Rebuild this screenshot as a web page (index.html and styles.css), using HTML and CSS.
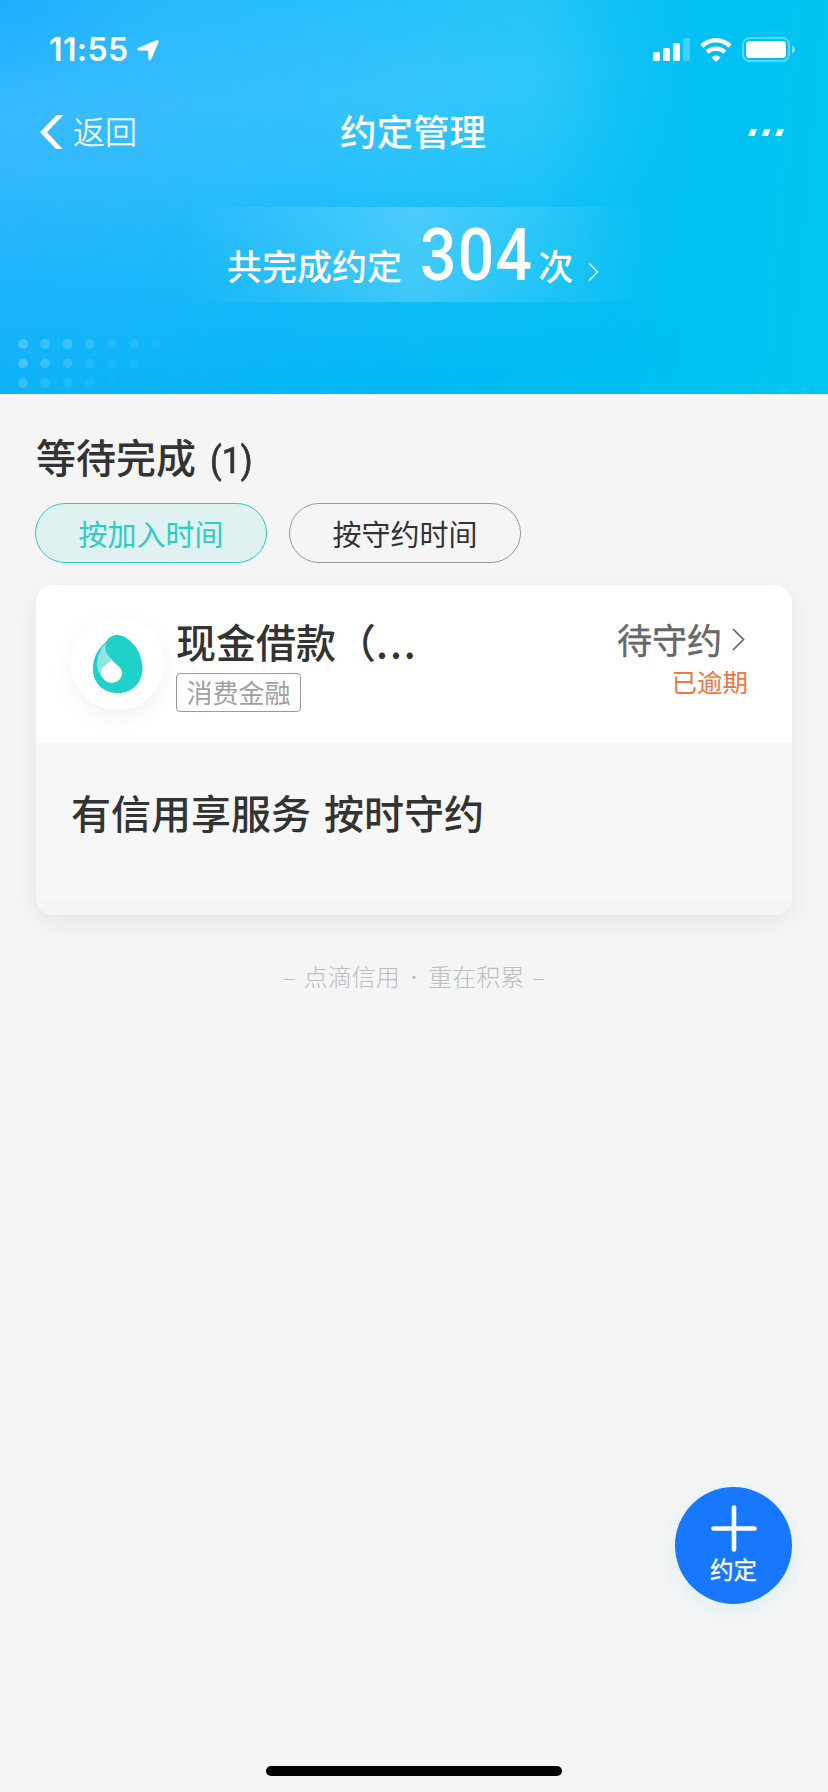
FILE: index.html
```html
<!DOCTYPE html>
<html lang="zh-CN">
<head>
<meta charset="utf-8">
<title>约定管理</title>
<link rel="stylesheet" href="styles.css">
</head>
<body>
<div class="screen">
  <header class="hero">
    <svg class="hero-dots" viewBox="0 0 828 394" fill="#fff">
      <g opacity=".22"><circle cx="23" cy="344" r="5"/><circle cx="23" cy="363.5" r="4.8"/></g>
      <g opacity=".17"><circle cx="45.2" cy="344" r="5"/><circle cx="67.5" cy="344" r="5"/><circle cx="45.2" cy="363.5" r="4.8"/><circle cx="23" cy="383" r="4.8"/></g>
      <g opacity=".12"><circle cx="89.6" cy="344" r="5"/><circle cx="67.5" cy="363.5" r="4.8"/><circle cx="45.2" cy="383" r="4.8"/></g>
      <g opacity=".08"><circle cx="112" cy="344" r="5"/><circle cx="134" cy="344" r="5"/><circle cx="89.6" cy="363.5" r="4.8"/><circle cx="67.5" cy="383" r="4.6"/></g>
      <g opacity=".05"><circle cx="156.5" cy="344" r="5"/><circle cx="112" cy="363.5" r="4.8"/><circle cx="134" cy="363.5" r="4.6"/><circle cx="89.6" cy="383" r="4.6"/><circle cx="783" cy="390" r="4.5"/><circle cx="805" cy="390" r="4.5"/></g>
      <g opacity=".02"><circle cx="156.5" cy="363.5" r="4.5"/><circle cx="112" cy="383" r="4.5"/><circle cx="761" cy="390" r="4.5"/></g>
    </svg>
    <div class="status">
      <div class="clock">
        <span class="time">11:55</span>
        <svg width="22" height="21" viewBox="0 0 22 21"><path d="M1.200 8.200 19.400.5Q22-.2 21.200 2.400L14 19Q12.600 21.500 11.600 19L11.400 11.200Q11.300 10.200 10.300 10.200L1.600 10.300Q-.8 9.600 1.200 8.200Z" fill="#fff" stroke="#fff" stroke-width=".6"/></svg>
      </div>
      <div class="signals">
        <svg width="37" height="23" viewBox="0 0 37 23" fill="#fff"><rect y="14" width="7" height="9" rx="1.6"/><rect x="10" y="10" width="7" height="13" rx="1.6"/><rect x="20" y="5" width="7" height="18" rx="1.6"/><rect x="30" width="7" height="23" rx="1.6" opacity=".25"/></svg>
        <svg width="32" height="24" viewBox="0 0 32 24" fill="none" stroke="#fff" stroke-width="4.4"><path d="M1.8 8.2Q8 2.3 16 2.3T30.2 8.2"/><path d="M7 14.2Q11 10.6 16 10.6T25 14.2"/><path d="M16 24 11.4 19.4Q16 15.8 20.6 19.4Z" fill="#fff" stroke="none"/></svg>
        <svg width="53" height="25" viewBox="0 0 53 25"><rect x="1" y="1" width="46" height="23" rx="6.500" fill="none" stroke="#fff" stroke-width="2" opacity=".35"/><rect x="4" y="4" width="40" height="17" rx="3.500" fill="#fff"/><path d="M50 8.500Q53 9.500 53 12.500T50 16.500Z" fill="#fff" opacity=".45"/></svg>
      </div>
    </div>
    <nav class="nav">
      <a class="back">
        <svg width="24" height="34" viewBox="0 0 24 34"><path d="M16.500 0H23.500L7 17.300 22.700 34H16L0 17.300Z" fill="#fff"/></svg>
        <span>返回</span>
      </a>
      <h1 class="title">约定管理</h1>
      <svg class="more" width="37" height="7" viewBox="0 0 37 7" fill="#fff"><path d="M3 0H9L6.400 7H.2Z"/><path d="M16.500 0H22.500L19.900 7H13.700Z"/><path d="M30 0H36L33.400 7H27.200Z"/></svg>
    </nav>
    <div class="total">
      <span class="total-label">共完成约定</span>
      <span class="total-num">304</span>
      <span class="total-unit">次</span>
      <svg class="total-arrow" width="11" height="20" viewBox="0 0 11 20" fill="none" stroke="#fff" stroke-width="1.3"><path d="M1 1.300 9.600 10 1 18.700"/></svg>
    </div>
  </header>

  <main class="content">
    <h2 class="section-title">等待完成<span class="count">(1)</span></h2>
    <div class="tabs">
      <button class="tab tab-active">按加入时间</button>
      <button class="tab">按守约时间</button>
    </div>
    <article class="card">
      <div class="card-head">
        <div class="logo">
          <svg width="50" height="58" viewBox="0 0 50 58"><path d="M24 0C36 0 49.500 16 49.500 33C49.500 48 39 58 25 58C10 58 0 48 0 34C0 21 6 13 13 7C16 2 19 0 24 0Z" fill="#1fd1c9"/><path d="M13 8C6 15 3 25 4.500 33C5 37 7 40 9 42L20 26C14 20 11 15 13 8Z" fill="#8ce7e3"/><path d="M18.500 24C21 29 29.300 31.500 29.300 38.500A10.700 10.400 0 0 1 8 38.500C8 32 15 29.500 18.500 24Z" fill="#fff"/></svg>
        </div>
        <div class="info">
          <div class="name">现金借款（<span class="ellipsis">...</span></div>
          <span class="tag">消费金融</span>
        </div>
        <div class="state">
          <div class="state-main">待守约<svg width="13" height="23" viewBox="0 0 13 23" fill="none" stroke="#666" stroke-width="1.700"><path d="M1 1 11.500 11.500 1 22"/></svg></div>
          <div class="overdue">已逾期</div>
        </div>
      </div>
      <div class="card-body">有信用享服务 按时守约</div>
      <div class="card-foot"></div>
    </article>
    <p class="slogan">– 点滴信用 <span class="dot">·</span> 重在积累 –</p>
  </main>

  <button class="fab">
    <svg width="46" height="47" viewBox="0 0 46 47" fill="none" stroke="#fff" stroke-width="4.600" stroke-linecap="round"><path d="M23 2.500V44.500M2.500 23.500H43.500"/></svg>
    <span>约定</span>
  </button>
  <div class="home-bar"></div>
</div>
</body>
</html>
```
FILE: styles.css
```css
* { box-sizing: border-box; }
body { margin: 0; background: #f5f5f5; font-family: "Noto Sans CJK SC", sans-serif; color: #333; }
svg { display: block; flex: none; }
button { font-family: inherit; margin: 0; padding: 0; }
.screen { position: relative; width: 828px; height: 1792px; overflow: hidden; background: #f5f5f5; }

.hero {
  position: relative;
  height: 394px;
  color: #fff;
  background: linear-gradient(95deg, #0cb1f8 0%, #04b8f6 45%, #00bef4 76%, #00c3f1 90%, #00c6f0 100%);
}
.hero::before {
  content: "";
  position: absolute;
  inset: 0;
  background:
    radial-gradient(ellipse 150px 90px at 0 0, rgba(20,160,255,.45), rgba(20,160,255,0)),
    linear-gradient(90deg, #38b8ff 0%, #36c0fd 35%, #34cbf9 70%);
  -webkit-mask-image:
    linear-gradient(175deg, rgba(0,0,0,.6) 0%, #000 26%, rgba(0,0,0,.85) 38%, rgba(0,0,0,.4) 60%, transparent 90%),
    linear-gradient(90deg, #000 50%, rgba(0,0,0,.9) 64%, rgba(0,0,0,.3) 76%, transparent 86%);
  -webkit-mask-composite: source-in;
  mask-composite: intersect;
}
.hero-dots { position: absolute; inset: 0; width: 828px; height: 394px; }
.status { position: relative; display: flex; justify-content: space-between; height: 96px; padding: 36px 33px 0 49px; }
.clock { display: flex; gap: 8px; height: 28px; align-items: center; }
.time { font: 600 32px/28px Inter, sans-serif; letter-spacing: .4px; }
.signals { display: flex; gap: 10px; height: 27px; align-items: center; }

.nav { position: relative; display: grid; grid-template-columns: 1fr auto 1fr; align-items: center; height: 72px; padding: 0 43px 0 40px; }
.back { display: flex; align-items: center; gap: 9px; font-size: 32px; line-height: 40px; font-weight: 300; -webkit-text-stroke: .3px #fff; }
.back span { padding-bottom: 4px; }
.title { margin: 0 0 0 1px; padding-bottom: 3px; font-size: 36.500px; line-height: 44px; font-weight: 500; }
.more { justify-self: end; }

.total {
  position: relative;
  display: flex;
  align-items: baseline;
  height: 95px;
  width: 500px;
  margin: 39px auto 0;
  padding-left: 63px;
  background: linear-gradient(90deg, rgba(255,255,255,0) 4%, rgba(255,255,255,.2) 50%, rgba(255,255,255,0) 98%);
}
.total-label { font-size: 35px; line-height: 116px; font-weight: 500; }
.total-num { margin-left: 18px; font: 500 72px/91px Roboto, sans-serif; letter-spacing: 1.500px; transform: scaleX(.89); transform-origin: left; }
.total-unit { margin-left: -9px; font-size: 35px; line-height: 91px; font-weight: 500; }
.total-arrow { margin-left: 15px; align-self: flex-start; margin-top: 55px; }

.content { padding: 37px 36px 0; }
.section-title { margin: 0; font-size: 40px; line-height: 50px; font-weight: 500; }
.count { display: inline-block; margin-left: 14px; font: 400 37px/40px Roboto, sans-serif; -webkit-text-stroke: .7px #333; transform: scaleX(.92); transform-origin: left; }
.tabs { display: flex; gap: 22px; margin: 22px 0 0 -1px; }
.tab { width: 232px; height: 60px; border: 1px solid #999; border-radius: 30px; background: transparent; color: #333; font-size: 29px; line-height: 56px; }
.tab-active { border-color: #2cccc6; background: #dff1f1; color: #2cccc6; }

.card { margin-top: 22px; height: 330px; border-radius: 18px; overflow: hidden; background: #f7f7f7; box-shadow: 0 8px 26px rgba(0,0,0,.065); display: flex; flex-direction: column; }
.card-head { display: flex; height: 158px; padding: 0 45px 0 35px; background: #fff; }
.logo { flex: none; display: flex; align-items: center; justify-content: center; width: 93px; height: 93px; margin-top: 32px; border-radius: 50%; background: #fff; box-shadow: 0 6px 24px rgba(0,0,0,.06); }
.info { margin: 30px 0 0 12px; }
.name { font-size: 40px; line-height: 52px; font-weight: 500; white-space: nowrap; }
.ellipsis { letter-spacing: 2px; }
.tag { display: block; width: 125px; height: 39px; margin-top: 6px; border: 1px solid #999; border-radius: 4px; color: #a0a0a0; font-size: 26px; line-height: 36px; text-align: center; }
.state { margin: 31px 0 0 auto; text-align: right; }
.state-main { display: flex; align-items: center; gap: 10px; padding-right: 2px; font-size: 35px; line-height: 46px; color: #666; -webkit-text-stroke: .4px #666; }
.overdue { margin-top: 2px; margin-right: -1px; font-size: 25.500px; line-height: 34px; color: #ee7744; }
.card-body { flex: 1; padding: 41px 35px 0; font-size: 40px; line-height: 56px; font-weight: 500; word-spacing: 4px; }
.card-foot { height: 14px; background: #f5f5f5; }
.slogan { margin: 43px 0 0; text-align: center; font-size: 24px; line-height: 36px; font-weight: 300; color: #bdbdbd; word-spacing: 3px; }
.dot { margin: 0 2.500px; font-family: Roboto, sans-serif; font-weight: 500; }

.fab { position: absolute; left: 675px; top: 1487px; width: 117px; height: 117px; padding-top: 18px; border: 0; border-radius: 50%; background: #1777ff; color: #fff; display: flex; flex-direction: column; align-items: center; box-shadow: 0 5px 22px rgba(110,215,245,.2); }
.fab span { font-size: 23.500px; line-height: 34px; -webkit-text-stroke: .3px #fff; }
.home-bar { position: absolute; left: 266px; top: 1766px; width: 296px; height: 10px; border-radius: 5px; background: #000; }
```
